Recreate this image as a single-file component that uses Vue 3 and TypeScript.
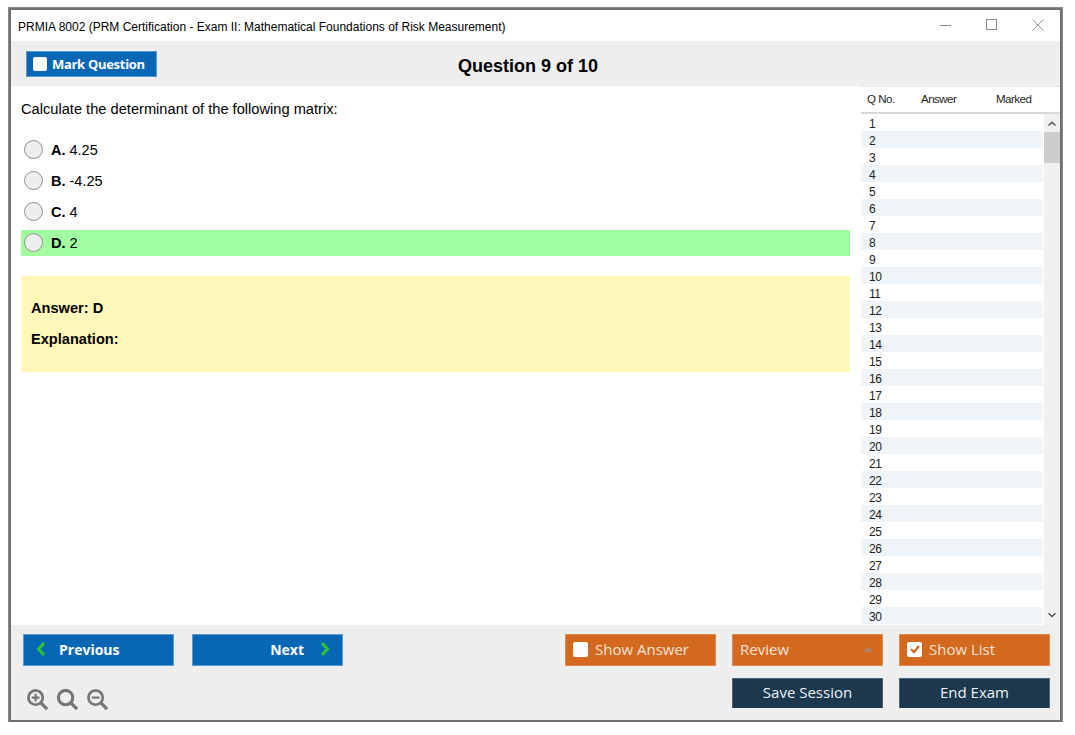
<script setup lang="ts">
const options = [
  { key: 'A.', text: '4.25', correct: false },
  { key: 'B.', text: '-4.25', correct: false },
  { key: 'C.', text: '4', correct: false },
  { key: 'D.', text: '2', correct: true },
]

const rows: number[] = Array.from({ length: 30 }, (_, i) => i + 1)
</script>

<template>
  <div class="window">
    <div class="titlebar">
      <span class="title">PRMIA 8002 (PRM Certification - Exam II: Mathematical Foundations of Risk Measurement)</span>
      <div class="controls">
        <svg width="12" height="12" viewBox="0 0 12 12"><path d="M0 6.5h11" stroke="#8a8a8a" fill="none" /></svg>
        <svg width="12" height="12" viewBox="0 0 12 12"><rect x="0.5" y="0.5" width="10" height="10" stroke="#8a8a8a" fill="none" /></svg>
        <svg width="12" height="12" viewBox="0 0 12 12"><path d="M0.5 0.5l11 11M11.5 0.5l-11 11" stroke="#8a8a8a" fill="none" stroke-width="0.9" /></svg>
      </div>
    </div>

    <div class="toolbar">
      <button class="btn blue mark"><span class="check"></span>Mark Question</button>
      <h1 class="counter">Question 9 of 10</h1>
    </div>

    <div class="main">
      <div class="question">
        <p class="prompt">Calculate the determinant of the following matrix:</p>
        <div class="options">
          <div v-for="o in options" :key="o.key" class="option" :class="{ correct: o.correct }">
            <span class="radio"></span>
            <span class="label"><b>{{ o.key }}</b> {{ o.text }}</span>
          </div>
        </div>
        <div class="answer">
          <div>Answer: D</div>
          <div>Explanation:</div>
        </div>
      </div>

      <div class="side">
        <div class="side-head">
          <span>Q No.</span>
          <span>Answer</span>
          <span>Marked</span>
        </div>
        <div class="side-body">
          <div class="list">
            <div v-for="n in rows" :key="n" class="row" :class="{ even: n % 2 === 0 }">{{ n }}</div>
          </div>
          <div class="scrollbar">
            <svg class="arrow" width="10" height="8" viewBox="0 0 10 8"><path d="M1.5 5.5L5 2.2l3.5 3.3" stroke="#555" stroke-width="1.5" fill="none" /></svg>
            <div class="thumb"></div>
            <svg class="arrow down" width="10" height="8" viewBox="0 0 10 8"><path d="M1.5 2.2L5 5.5l3.5-3.3" stroke="#555" stroke-width="1.5" fill="none" /></svg>
          </div>
        </div>
      </div>
    </div>

    <div class="footer">
      <div class="foot-left">
        <div class="nav">
          <button class="btn blue navbtn prev">
            <svg width="10" height="16" viewBox="0 0 10 16"><path d="M8 2L2.5 8 8 14" stroke="#2fc52f" stroke-width="3" fill="none" /></svg>
            Previous
          </button>
          <button class="btn blue navbtn next">
            Next
            <svg width="10" height="16" viewBox="0 0 10 16"><path d="M2 2l5.5 6L2 14" stroke="#2fc52f" stroke-width="3" fill="none" /></svg>
          </button>
        </div>
        <div class="zoom">
          <svg width="23" height="23" viewBox="0 0 24 24">
            <circle cx="10" cy="10" r="7.5" stroke="#757575" stroke-width="2.8" fill="none" />
            <path d="M15.5 15.5L22 22" stroke="#757575" stroke-width="3.4" fill="none" />
            <path d="M6 10h8M10 6v8" stroke="#757575" stroke-width="2.2" fill="none" />
          </svg>
          <svg width="23" height="23" viewBox="0 0 24 24">
            <circle cx="10" cy="10" r="7.5" stroke="#757575" stroke-width="3.2" fill="none" />
            <path d="M15.5 15.5L22 22" stroke="#757575" stroke-width="3.4" fill="none" />
          </svg>
          <svg width="23" height="23" viewBox="0 0 24 24">
            <circle cx="10" cy="10" r="7.5" stroke="#757575" stroke-width="2.8" fill="none" />
            <path d="M15.5 15.5L22 22" stroke="#757575" stroke-width="3.4" fill="none" />
            <path d="M6 10h8" stroke="#757575" stroke-width="2.2" fill="none" />
          </svg>
        </div>
      </div>
      <div class="foot-right">
        <button class="btn orange"><span class="check"></span>Show Answer</button>
        <button class="btn orange review">Review<span class="caret"></span></button>
        <button class="btn orange">
          <span class="check on">
            <svg width="12" height="12" viewBox="0 0 12 12"><path d="M2 6l3 3 5-6" stroke="#d2691f" stroke-width="2.2" fill="none" /></svg>
          </span>Show List
        </button>
        <span></span>
        <button class="btn navy">Save Session</button>
        <button class="btn navy">End Exam</button>
      </div>
    </div>
  </div>
</template>

<style scoped>
.window {
  box-sizing: border-box;
  width: 1053px;
  height: 714px;
  margin: 8px 0 0 9px;
  border: 2px solid #6f6f6f;
  outline: 1px solid #8a8a8a;
  display: flex;
  flex-direction: column;
  background: #fff;
  font-family: "Liberation Sans", Arial, sans-serif;
  color: #000;
  overflow: hidden;
}
.titlebar {
  height: 31px;
  flex: none;
  display: flex;
  align-items: center;
  justify-content: space-between;
  padding: 0 16px 0 7px;
}
.title { font-size: 12px; padding-top: 2px; }
.controls { display: flex; gap: 34px; margin-top: -2px; }
.toolbar {
  height: 45px;
  flex: none;
  background: #eee;
  position: relative;
  display: flex;
  align-items: flex-start;
  padding: 10px 0 0 15px;
  box-sizing: border-box;
}
.counter {
  position: absolute;
  left: 447px;
  top: 14px;
  margin: 0;
  font-size: 18px;
  line-height: 22px;
  font-weight: bold;
}
.btn {
  box-sizing: border-box;
  border: 1px solid transparent;
  border-radius: 0;
  padding: 0 0 2px;
  margin: 0;
  display: flex;
  align-items: center;
  color: #fff;
  font-family: "Open Sans", "Noto Sans", sans-serif;
  font-size: 15px;
  cursor: pointer;
}
.blue { background: #0867b5; border-color: #5a9bd0; font-weight: 700; }
.mark {
  width: 131px;
  height: 26px;
  font-size: 13px;
  padding: 0 0 0 6px;
  letter-spacing: -0.3px;
}
.check {
  width: 14px;
  height: 14px;
  background: #fff;
  border-radius: 2px;
  margin-right: 5px;
  flex: none;
  display: flex;
  align-items: center;
  justify-content: center;
}
.main {
  flex: 1;
  min-height: 0;
  display: flex;
}
.question {
  width: 839px;
  box-sizing: border-box;
  padding: 14px 0 0 10px;
  flex: none;
}
.prompt {
  margin: 0;
  font-size: 14.65px;
  line-height: 18px;
}
.options {
  margin-top: 19px;
  display: flex;
  flex-direction: column;
  gap: 5px;
}
.option {
  height: 26px;
  display: flex;
  align-items: center;
  padding-left: 3px;
  font-size: 14.5px;
}
.option.correct { background: #a1ffa1; }
.radio {
  box-sizing: border-box;
  width: 19px;
  height: 19px;
  border-radius: 50%;
  background: #eee;
  border: 1px solid #8f8f8f;
  margin-right: 8px;
  margin-bottom: 2px;
  flex: none;
}
.answer {
  margin-top: 20px;
  height: 96px;
  box-sizing: border-box;
  background: #fff8b8;
  padding: 23px 10px 0;
  font-size: 14.6px;
  font-weight: bold;
  line-height: 18px;
  display: flex;
  flex-direction: column;
  gap: 13px;
}
.side {
  margin-left: 11px;
  flex: 1;
  min-width: 0;
  display: flex;
  flex-direction: column;
  font-size: 12px;
  letter-spacing: -0.5px;
  color: #222;
}
.side-head {
  height: 28px;
  flex: none;
  box-sizing: border-box;
  display: flex;
  align-items: center;
  border-top: 1px solid #e2e2e2;
  border-bottom: 2px solid #d8d8d8;
  padding: 0 0 2px 6px;
  font-size: 11.5px;
}
.side-head span:nth-child(1) { width: 54px; }
.side-head span:nth-child(2) { width: 75px; }
.side-body {
  flex: 1;
  min-height: 0;
  display: flex;
  overflow: hidden;
}
.list {
  flex: 1;
}
.row {
  height: 17.03px;
  line-height: 21px;
  padding-left: 8px;
}
.row.even { background: #eff4f9; }
.scrollbar {
  width: 16px;
  flex: none;
  margin-left: 1px;
  background: #f0f0f0;
  position: relative;
  display: flex;
  flex-direction: column;
  align-items: center;
}
.arrow {
  margin-top: 6px;
}
.arrow.down {
  position: absolute;
  bottom: 6px;
}
.thumb {
  width: 100%;
  height: 31px;
  margin-top: 4px;
  background: #cdcdcd;
}
.footer {
  height: 95px;
  flex: none;
  background: #eee;
  box-sizing: border-box;
  display: flex;
  justify-content: space-between;
  padding: 9px 10px 0 12px;
}
.foot-left {
  display: flex;
  flex-direction: column;
}
.nav { display: flex; gap: 18px; }
.navbtn {
  width: 151px;
  height: 32px;
  font-size: 14px;
  gap: 13px;
}
.prev { padding-left: 12px; }
.next { justify-content: flex-end; padding-right: 12px; gap: 16px; }
.zoom {
  display: flex;
  gap: 7px;
  margin-top: 22px;
  margin-left: 3px;
}
.foot-right {
  display: grid;
  grid-template-columns: 151px 151px 151px;
  grid-template-rows: 32px 30px;
  column-gap: 16px;
  row-gap: 12px;
}
.orange {
  background: #d2691f;
  border-color: #e08b52;
  padding-left: 7px;
  color: #f3e3d6;
}
.orange .check { width: 15px; height: 15px; margin-right: 7px; }
.review { justify-content: space-between; padding-right: 9px; }
.caret {
  width: 0;
  height: 0;
  border-left: 5px solid transparent;
  border-right: 5px solid transparent;
  border-bottom: 5px solid #a8846a;
}
.navy {
  background: #1c384f;
  border-color: #4c6478;
  border-bottom: 0;
  padding-bottom: 3px;
  justify-content: center;
  color: #eef1f3;
}
</style>

<style>
html, body { background: #fff; margin: 0; }
</style>
